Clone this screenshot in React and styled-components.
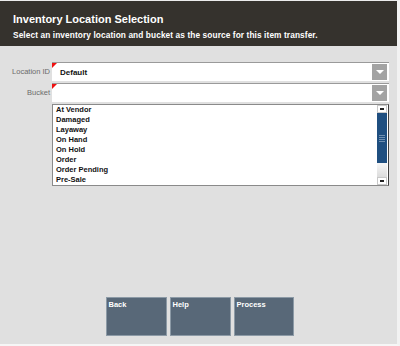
import React from 'react';
import styled, { createGlobalStyle } from 'styled-components';

const GlobalStyle = createGlobalStyle`
	html, body {
		margin: 0;
		padding: 0;
		background: #e0e0e0;
	}
	body {
		font-family: "Liberation Sans", Arial, sans-serif;
	}
`;

const Screen = styled.div`
	width: 400px;
	height: 346px;
	box-sizing: border-box;
	background: #e0e0e0;
	border-top: 1px solid #ececec;
	border-right: 3px solid #f2f2f2;
	border-bottom: 2px solid #f6f6f6;
	display: flex;
	flex-direction: column;
`;

const Header = styled.div`
	height: 45px;
	background: #35322d;
	color: #fff;
	padding: 12px 0 0 13px;
	box-sizing: border-box;
	font-weight: bold;
`;

const Title = styled.div`
	font-size: 11px;
	line-height: 13px;
`;

const Subtitle = styled.div`
	font-size: 8.3px;
	line-height: 11px;
	margin-top: 4px;
	letter-spacing: 0.1px;
`;

const Form = styled.div`
	display: grid;
	grid-template-columns: 50px 337px;
	column-gap: 2px;
	row-gap: 2px;
	padding-top: 16px;
`;

const Label = styled.div`
	font-size: 7.5px;
	color: #6b6b6b;
	text-align: right;
	padding-top: 5px;
`;

const Field = styled.div`
	position: relative;
	height: 19px;
	background: #fff;
	border-top: 1px solid #9a9a9a;
	box-sizing: border-box;
	display: flex;
	align-items: center;
	font-size: 8px;
	padding-left: 8px;
	color: #111;
	font-weight: bold;
`;

const Flag = styled.span`
	position: absolute;
	left: 0;
	top: 0;
	width: 0;
	height: 0;
	border-top: 5px solid #f01010;
	border-right: 5px solid transparent;
`;

const DropButton = styled.div`
	position: absolute;
	right: 2px;
	top: 1px;
	width: 15px;
	height: 16px;
	background: #a3a3a3;
	display: flex;
	align-items: center;
	justify-content: center;
`;

const Arrow = styled.span`
	width: 0;
	height: 0;
	border-left: 4px solid transparent;
	border-right: 4px solid transparent;
	border-top: 4px solid #fff;
`;

const ListBox = styled.div`
	grid-column: 2;
	height: 82px;
	box-sizing: border-box;
	background: #fff;
	border: 1px solid #8a8a8a;
	border-right-color: #404040;
	display: flex;
`;

const Items = styled.ul`
	flex: 1;
	list-style: none;
	margin: 0;
	padding: 0 0 0 3px;
`;

const Item = styled.li`
	font-size: 7.5px;
	line-height: 10px;
	color: #111;
	font-weight: bold;
`;

const Scrollbar = styled.div`
	width: 10px;
	margin: 0 1px;
	display: flex;
	flex-direction: column;
	background: #f4f4f4;
`;

const ScrollBtn = styled.div`
	height: 8px;
	background: #fff;
	border: 1px solid #c8c8c8;
	box-sizing: border-box;
	display: flex;
	align-items: center;
	justify-content: center;
	&::after {
		content: '';
		width: 4px;
		height: 2px;
		background: #222;
	}
`;

const Thumb = styled.div`
	height: 50px;
	background: #1f4f80;
	display: flex;
	flex-direction: column;
	align-items: center;
	justify-content: center;
	gap: 1px;
`;

const Grip = styled.span`
	width: 6px;
	height: 1px;
	background: #6f8fb0;
`;

const Track = styled.div`
	flex: 1;
	background: linear-gradient(#f6f6f6, #dcdcdc);
`;

const Spacer = styled.div`
	flex: 1;
`;

const ButtonRow = styled.div`
	display: flex;
	justify-content: center;
	gap: 3px;
	padding: 0 0 8px 2px;
`;

const ActionButton = styled.button`
	width: ${p => p.w}px;
	height: 39px;
	background: #586878;
	border: 1px solid #8c9aa6;
	color: #fff;
	font-family: "Liberation Sans", Arial, sans-serif;
	font-weight: bold;
	font-size: 7.5px;
	text-align: left;
	padding: 2px 2px 0;
	display: flex;
	align-items: flex-start;
`;

const buckets = ['At Vendor', 'Damaged', 'Layaway', 'On Hand', 'On Hold', 'Order', 'Order Pending', 'Pre-Sale'];

const App = () => (
	<>
		<GlobalStyle />
		<Screen>
			<Header>
				<Title>Inventory Location Selection</Title>
				<Subtitle>Select an inventory location and bucket as the source for this item transfer.</Subtitle>
			</Header>
			<Form>
				<Label>Location ID</Label>
				<Field>
					<Flag />
					Default
					<DropButton><Arrow /></DropButton>
				</Field>
				<Label>Bucket</Label>
				<Field>
					<Flag />
					<DropButton><Arrow /></DropButton>
				</Field>
				<ListBox>
					<Items>
						{buckets.map(each => (
							<Item key={each}>{each}</Item>
						))}
					</Items>
					<Scrollbar>
						<ScrollBtn />
						<Thumb>
							<Grip /><Grip /><Grip /><Grip />
						</Thumb>
						<Track />
						<ScrollBtn />
					</Scrollbar>
				</ListBox>
			</Form>
			<Spacer />
			<ButtonRow>
				<ActionButton w={61}>Back</ActionButton>
				<ActionButton w={61}>Help</ActionButton>
				<ActionButton w={60}>Process</ActionButton>
			</ButtonRow>
		</Screen>
	</>
);

export default App;
